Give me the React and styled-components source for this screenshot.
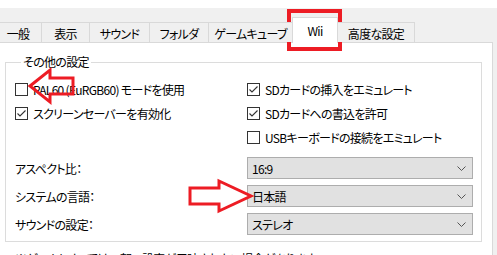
import React from 'react'
import styled, { createGlobalStyle } from 'styled-components'

const GlobalStyle = createGlobalStyle`
  html, body {
    margin: 0;
    padding: 0;
    background: #fff;
    overflow: hidden;
  }
  body {
    font-family: "Noto Sans CJK JP", "Noto Sans", sans-serif;
    font-size: 12px;
    font-feature-settings: "palt";
    letter-spacing: -0.7px;
    color: #000;
  }
`

const tabs = [
    { label: '一般', width: 48 },
    { label: '表示', width: 49 },
    { label: 'サウンド', width: 61 },
    { label: 'フォルダ', width: 60 },
    { label: 'ゲームキューブ', width: 85 },
    { label: 'Wii', width: 46, active: true },
    { label: '高度な設定', width: 78 },
]

const Checkbox = ({ checked }) => <Box>
    {checked && <svg width="11" height="11" viewBox="0 0 11 11">
        <polyline points="1.5,5.5 4,8 9.5,2.5" fill="none" stroke="#333" strokeWidth="1.1" />
    </svg>}
</Box>

const Check = ({ checked, children }) => <CheckRow>
    <Checkbox checked={checked} />
    <span>{children}</span>
</CheckRow>

const Select = ({ value, first }) => <SelectBox $first={first}>
    <span>{value}</span>
    <svg width="9" height="5" viewBox="0 0 9 5">
        <polyline points="0.5,0.5 4.5,4.5 8.5,0.5" fill="none" stroke="#555" strokeWidth="1" />
    </svg>
</SelectBox>

const App = () => {
    return <Page>
        <GlobalStyle />
        <Frame>
            <TabBar>
                {tabs.map(t => <Tab key={t.label} $w={t.width} $active={t.active}>{t.label}</Tab>)}
            </TabBar>
            <Panel>
                <Group>
                    <Legend>その他の設定</Legend>
                    <Grid>
                        <Check>PAL60 (EuRGB60) モードを使用</Check>
                        <Check checked>SDカードの挿入をエミュレート</Check>
                        <Check checked>スクリーンセーバーを有効化</Check>
                        <Check checked>SDカードへの書込を許可</Check>
                        <div />
                        <Check>USBキーボードの接続をエミュレート</Check>
                        <FieldLabel $first>アスペクト比：</FieldLabel>
                        <Select value="16:9" first />
                        <FieldLabel>システムの言語：</FieldLabel>
                        <Select value="日本語" />
                        <FieldLabel>サウンドの設定：</FieldLabel>
                        <Select value="ステレオ" />
                    </Grid>
                </Group>
                <Note>※ゲームによっては一部の設定が反映されない場合があります</Note>
            </Panel>
        </Frame>
        <Marks width="497" height="255" viewBox="0 0 497 255">
            <rect x="289" y="11" width="51" height="38" fill="none" stroke="#ed1c24" strokeWidth="4" />
            <polygon points="30,86 50,70 50,78 73,78 73,94 50,94 50,102" fill="none" stroke="#ed1c24" strokeWidth="3" strokeLinejoin="miter" />
            <polygon points="190,188 219,188 219,181 251,196 219,211 219,204 190,204" fill="none" stroke="#ed1c24" strokeWidth="3" strokeLinejoin="miter" />
        </Marks>
    </Page>
}

const Page = styled.div`
  position: relative;
  width: 497px;
  height: 255px;
  overflow: hidden;
  padding-top: 8px;
  box-sizing: border-box;
`

const Frame = styled.div`
  height: 247px;
  background: #f0f0f0;
  padding-right: 4px;
  display: flex;
  flex-direction: column;
`

const TabBar = styled.div`
  height: 34px;
  flex-shrink: 0;
  display: flex;
  align-items: flex-end;
  margin-left: -6px;
`

const Tab = styled.div`
  position: relative;
  z-index: ${p => p.$active ? 2 : 1};
  box-sizing: border-box;
  width: ${p => p.$w}px;
  height: ${p => p.$active ? 26 : 20}px;
  margin-right: -1px;
  margin-bottom: ${p => p.$active ? -1 : 0}px;
  border: 1px solid #d9d9d9;
  border-bottom: none;
  background: ${p => p.$active ? '#fff' : '#f0f0f0'};
  display: flex;
  align-items: center;
  justify-content: center;
  padding-top: ${p => p.$active ? 0 : 1}px;
  white-space: nowrap;
`

const Panel = styled.div`
  flex: 1;
  background: #fff;
  border-top: 1px solid #d9d9d9;
  border-right: 1px solid #d9d9d9;
  padding-top: 11px;
  overflow: hidden;
`

const Group = styled.fieldset`
  box-sizing: border-box;
  width: 477px;
  margin: 0 0 0 5px;
  padding: 7px 0 6px 9px;
  border: 1px solid #dcdcdc;
  min-inline-size: 0;
`

const Legend = styled.legend`
  padding: 0 2px;
  margin-left: 6px;
  line-height: 16px;
`

const Grid = styled.div`
  display: grid;
  grid-template-columns: 232px 226px;
  grid-auto-rows: minmax(24px, auto);
`

const CheckRow = styled.label`
  display: flex;
  align-items: center;
  gap: 5px;
  height: 24px;
  white-space: nowrap;
`

const Box = styled.span`
  box-sizing: border-box;
  width: 13px;
  height: 13px;
  border: 1px solid #333;
  background: #fff;
  display: flex;
  align-items: center;
  justify-content: center;
`

const FieldLabel = styled.div`
  display: flex;
  align-items: center;
  height: 22px;
  margin-top: ${p => p.$first ? 8 : 6}px;
`

const SelectBox = styled.div`
  box-sizing: border-box;
  height: 22px;
  margin-top: ${p => p.$first ? 8 : 6}px;
  border: 1px solid #adadad;
  background: #e1e1e1;
  display: flex;
  align-items: center;
  justify-content: space-between;
  padding: 0 6px 0 4px;
`

const Note = styled.div`
  margin: 9px 0 0 15px;
  line-height: 16px;
  white-space: nowrap;
`

const Marks = styled.svg`
  position: absolute;
  left: 0;
  top: 0;
  pointer-events: none;
`

export default App
